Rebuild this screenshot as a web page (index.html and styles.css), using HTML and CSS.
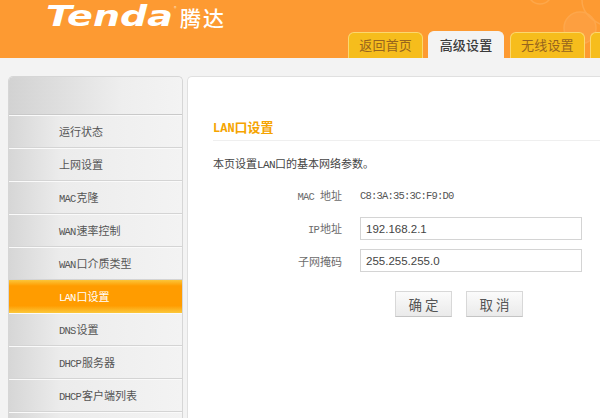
FILE: index.html
```html
<!DOCTYPE html>
<html lang="zh">
<head>
<meta charset="utf-8">
<title>LAN口设置</title>
<link rel="stylesheet" href="styles.css">
</head>
<body>
<header class="header">
  <svg class="deco" width="110" height="58" viewBox="0 0 110 58" aria-hidden="true">
    <circle cx="50" cy="-8" r="12" fill="none" stroke="#fda74a" stroke-width="1.5"/>
    <circle cx="90" cy="28" r="16" fill="#fd9f40" stroke="#fda74c" stroke-width="1.5"/>
    <path d="M92 0 C92 10 98 18 110 24" fill="none" stroke="#fda74c" stroke-width="1.5"/>
  </svg>
  <div class="brand"><span class="brand-en">Tenda</span><span class="reg">®</span><span class="brand-cn">腾达</span></div>
  <nav class="tabs">
    <a class="tab">返回首页</a>
    <a class="tab tab-active">高级设置</a>
    <a class="tab tab-wide">无线设置</a>
    <a class="tab tab-cut"></a>
  </nav>
</header>
<div class="page">
  <aside class="side">
    <div class="side-top"></div>
    <a class="item">运行状态</a>
    <a class="item">上网设置</a>
    <a class="item"><span class="lat">MAC</span>克隆</a>
    <a class="item"><span class="lat">WAN</span>速率控制</a>
    <a class="item"><span class="lat">WAN</span>口介质类型</a>
    <a class="item item-active"><span class="lat">LAN</span>口设置</a>
    <a class="item"><span class="lat">DNS</span>设置</a>
    <a class="item"><span class="lat">DHCP</span>服务器</a>
    <a class="item"><span class="lat">DHCP</span>客户端列表</a>
    <a class="item"></a>
  </aside>
  <main class="panel">
    <h1 class="title"><span class="lat-b">LAN</span>口设置</h1>
    <p class="desc">本页设置<span class="lat-d">LAN</span>口的基本网络参数。</p>
    <div class="form">
      <span class="label"><span class="lat">MAC</span>&nbsp; 地址</span>
      <span class="value">C8:3A:35:3C:F9:D0</span>
      <span class="label"><span class="lat">IP</span>地址</span>
      <input class="field" type="text" value="192.168.2.1">
      <span class="label">子网掩码</span>
      <input class="field" type="text" value="255.255.255.0">
    </div>
    <div class="actions">
      <button class="btn" type="button">确 定</button>
      <button class="btn" type="button">取 消</button>
    </div>
  </main>
</div>
</body>
</html>
```
FILE: styles.css
```css
* { box-sizing: border-box; }
html, body { margin: 0; height: 418px; overflow: hidden; }
body {
  width: 600px;
  background: #f3f3f3;
  font-family: "Noto Sans CJK SC", "Liberation Sans", sans-serif;
  font-size: 11px;
  color: #444;
}
.lat { font-family: "Liberation Mono", monospace; font-size: 10.5px; letter-spacing: -.8px; margin-right: 1px; }
.lat-d { font-family: "Liberation Mono", monospace; font-size: 11px; letter-spacing: -.6px; }
.lat-b { font-family: "Liberation Mono", monospace; font-size: 12px; font-weight: 700; }

.header {
  position: relative;
  height: 58px;
  background: #fd9a32;
  display: flex;
  justify-content: space-between;
  align-items: flex-end;
  overflow: hidden;
}
.deco { position: absolute; top: 0; right: 0; }
.brand {
  align-self: flex-start;
  display: flex;
  align-items: flex-start;
  margin-left: 46px;
  color: #fff;
  height: 34px;
}
.brand-en {
  display: block;
  font-family: "DejaVu Sans", sans-serif;
  font-style: italic;
  font-weight: 700;
  font-size: 28px;
  line-height: 33px;
  height: 33px;
  width: 90px;
  margin-right: 38px;
  transform: scaleX(1.36);
  transform-origin: left top;
}
.reg { font-size: 5px; line-height: 8px; margin-top: 4px; width: 6px; color: #ffe6c8; }
.brand-cn { font-size: 21px; line-height: 26px; margin-top: 4px; letter-spacing: 2px; font-weight: 500; }

.tabs { position: relative; display: flex; align-items: flex-end; width: 252px; gap: 5px; }
.tab {
  width: 76px;
  height: 26px;
  background: #f6bd1c;
  border: 1px solid #fbd86e;
  border-bottom: 0;
  border-radius: 6px 6px 0 0;
  color: #96641e;
  text-align: center;
  font-size: 13px;
  line-height: 23px;
  letter-spacing: .2px;
}
.tab-active {
  width: 76px;
  height: 27px;
  background: #f3f3f3;
  border-color: #f3f3f3;
  color: #3a3a3a;
  line-height: 25px;
  font-weight: 500;
}
.tab-wide { margin-left: 1px; }
.tab-cut { width: 10px; border-radius: 6px 0 0 0; border-right: 0; }

.page {
  display: flex;
  gap: 4px;
  padding: 18px 0 0 8px;
  height: 360px;
  overflow: hidden;
}
.side {
  width: 175px;
  flex: none;
  overflow: hidden;
  border: 1px solid #d6d6d6;
  border-bottom: 0;
  border-radius: 5px 5px 0 0;
  background: #eee;
}
.side-top {
  height: 38px;
  background: linear-gradient(90deg, #d2d2d2, #eeeeee 65%, #f3f3f3);
  border-bottom: 1px solid #c9c9c9;
  border-radius: 4px 4px 0 0;
}
.item {
  display: block;
  height: 33px;
  padding-left: 50px;
  line-height: 30px;
  color: #555;
  border-bottom: 1px solid #d4d4d4;
  border-top: 1px solid #fafafa;
  background: linear-gradient(90deg, #d6d6d6, #ececec 30%, #f3f3f3);
}
.item-active {
  margin: 0;
  padding-left: 50px;
  color: #fff;
  border: 0;
  line-height: 32px;
  background: linear-gradient(180deg, #fbc63a 0, #ff9c00 18%, #ff9c00 78%, #fbc83c 100%);
}
.panel {
  flex: 1;
  background: #fff;
  border: 1px solid #e0e0e0;
  border-right: 0;
  border-bottom: 0;
  border-radius: 5px 0 0 0;
  padding: 41px 0 0 25px;
}
.title {
  margin: 0;
  height: 23px;
  font-size: 13px;
  line-height: 18px;
  font-weight: 700;
  color: #f5a400;
  border-bottom: 1px solid #efefef;
}
.desc { margin: 13px 0 0; line-height: 18px; color: #444; }
.form {
  display: grid;
  grid-template-columns: 129px 222px;
  grid-template-rows: 24px 23px 23px;
  column-gap: 18px;
  row-gap: 9px;
  align-items: center;
  margin-top: 10px;
}
.label { text-align: right; color: #6b6b6b; line-height: 18px; }
.value { font-family: "Liberation Mono", monospace; font-size: 10.5px; letter-spacing: -.8px; color: #555; }
.field {
  width: 222px;
  height: 23px;
  border: 1px solid #d4d4d4;
  padding: 0 5px;
  font-family: "Liberation Sans", sans-serif;
  font-size: 11.5px;
  color: #444;
  background: #fff;
  outline: 0;
}
.actions { display: flex; gap: 14px; margin: 19px 0 0 182px; }
.btn {
  width: 57px;
  height: 26px;
  padding: 0;
  border: 1px solid #d8d8d8;
  border-bottom-color: #c4c4c4;
  background: linear-gradient(180deg, #fbfbfb, #eaeaea);
  font-family: "Noto Sans CJK SC", sans-serif;
  font-size: 13.5px;
  color: #555;
}
```
